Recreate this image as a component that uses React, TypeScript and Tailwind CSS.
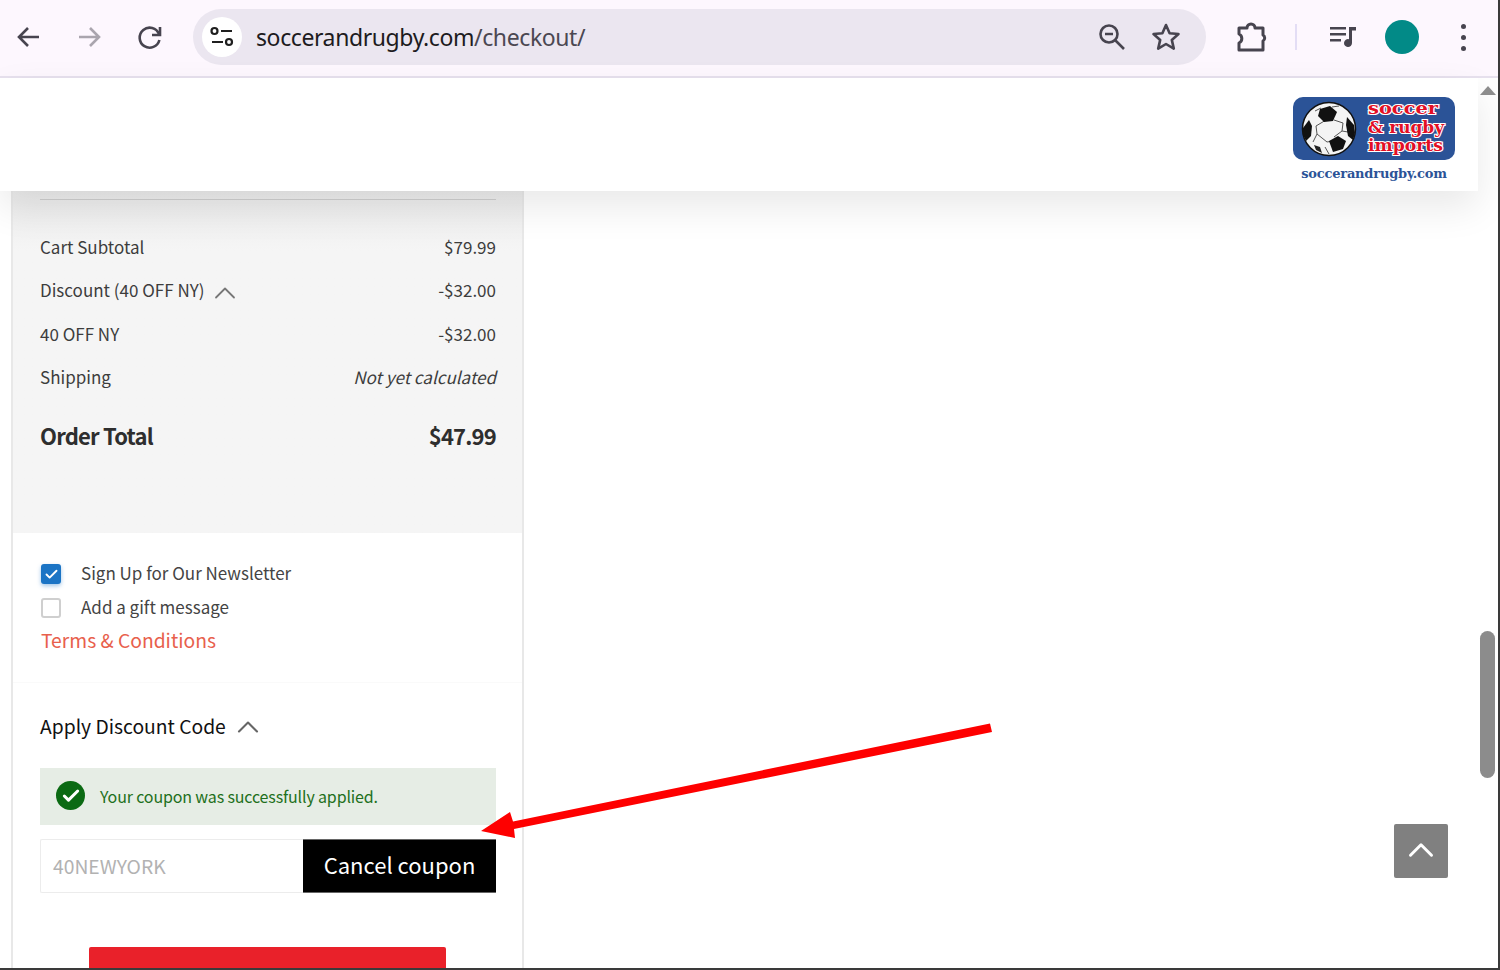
import React from 'react';
import { Check, ChevronUp } from 'lucide-react';

const sans = 'font-["Noto_Sans_CJK_SC","Noto_Sans",sans-serif]';

const SoccerBall = () => (
  <svg viewBox="0 0 56 56" className="h-[56px] w-[56px] shrink-0">
    <circle cx="28" cy="28" r="26.5" fill="#f4f4f4" stroke="#111" strokeWidth="1.5" />
    <g stroke="#555" strokeWidth="1" fill="none">
      <path d="M25 19l-10 6M33 19l9 3M16 33l-4 8M15 25l1 8 10 8 6-1M42 22l-1 8-8 6M41 30l6 1M31 6l7-1M20 7l-6 3M24 46l4 7M38 46l5-2" />
    </g>
    <path d="M19 8l10-3 7 6-4 9-9 1-6-6z" fill="#111" />
    <path d="M26 41l9-5 8 5-3 8-10 3z" fill="#111" transform="translate(2 -1)" />
    <path d="M2 27l6-8 3 6-1 10-5 5-3-6z" fill="#111" />
    <path d="M46 16l7 8 1 8-2 7-5-4-2-11z" fill="#111" />
    <path d="M13 44l6 2 2 6-6-3z" fill="#222" />
  </svg>
);

const Logo = () => (
  <div className="flex w-[162px] flex-col items-center">
    <div className="flex h-[63px] w-[162px] items-center rounded-[10px] bg-[#2b5397] pl-[8px]">
      <SoccerBall />
      <svg viewBox="0 0 90 60" className="ml-[3px] h-[60px] w-[90px]">
        <g
          fill="#e30f25"
          stroke="#fff"
          strokeWidth="2.2"
          fontFamily='"DejaVu Serif", serif'
          fontWeight="700"
          fontSize="17"
          style={{ paintOrder: 'stroke' }}
        >
          <text x="8" y="15" textLength="70" lengthAdjust="spacingAndGlyphs">soccer</text>
          <text x="8" y="33.500" textLength="76" lengthAdjust="spacingAndGlyphs">&amp; rugby</text>
          <text x="8" y="52" textLength="75" lengthAdjust="spacingAndGlyphs">imports</text>
        </g>
      </svg>
    </div>
    <div className='mt-[5px] w-[146px] text-center font-["DejaVu_Serif",serif] text-[13px] font-bold leading-[18px] tracking-[-0.2px] text-[#2b5397] whitespace-nowrap'>
      soccerandrugby.com
    </div>
  </div>
);

const ToolbarIcon = ({ children, className }: { children: React.ReactNode; className?: string }) => (
  <svg viewBox="0 0 32 32" fill="none" stroke="#47444f" strokeWidth="2.6" className={className ?? 'h-[32px] w-[32px] shrink-0'}>
    {children}
  </svg>
);

const Toolbar = () => (
  <div className="flex h-[78px] shrink-0 items-center border-b-2 border-[#e7e1ee] bg-[#fdf7fe] pb-[2px] pl-[13px]">
    <ToolbarIcon>
      <path d="M26 16H7M15 7l-9 9 9 9" />
    </ToolbarIcon>
    <ToolbarIcon className="ml-[28px] h-[32px] w-[32px] shrink-0 opacity-45">
      <path d="M6 16h19M17 7l9 9-9 9" />
    </ToolbarIcon>
    <ToolbarIcon className="ml-[29px] h-[32px] w-[32px] shrink-0">
      <path d="M25 13a10 10 0 1 0 .4 6" />
      <path d="M26 6v8h-8" />
    </ToolbarIcon>
    <div className="ml-[27px] flex h-[56px] w-[1013px] items-center rounded-full bg-[#ebe6f0] pl-[9px] pr-[24px]">
      <div className="flex h-[40px] w-[40px] shrink-0 items-center justify-center rounded-full bg-white">
        <svg viewBox="0 0 26 26" fill="none" stroke="#1f1f1f" strokeWidth="2.2" className="h-[26px] w-[26px]">
          <circle cx="5.500" cy="7" r="3" />
          <path d="M12 7h11M3 18h11" />
          <circle cx="20" cy="18" r="3" />
        </svg>
      </div>
      <div className='ml-[14px] flex-1 font-["Noto_Sans",sans-serif] text-[23px] leading-[32px] tracking-[-0.4px] text-[#1d1b20]'>
        soccerandrugby.com<span className="text-[#4b4852]">/checkout/</span>
      </div>
      <ToolbarIcon>
        <circle cx="13" cy="13" r="8.500" />
        <path d="M9 13h8M19 19l9 9" />
      </ToolbarIcon>
      <ToolbarIcon className="ml-[22px] h-[32px] w-[32px] shrink-0">
        <path d="M16 4l3.600 8.200 8.900.8-6.700 5.900 2 8.700-7.800-4.600-7.800 4.600 2-8.700L3.500 13l8.900-.8z" strokeLinejoin="round" />
      </ToolbarIcon>
    </div>
    <ToolbarIcon className="ml-[29px] h-[32px] w-[32px] shrink-0">
      <path
        d="M4 7h8a4 4 0 0 1 8 0h8v7a3.500 3.500 0 0 1 0 6v9H4v-7a5 5 0 0 0 0-9z"
        strokeWidth="3"
        strokeLinejoin="round"
      />
    </ToolbarIcon>
    <div className="ml-[28px] h-[26px] w-[2px] shrink-0 bg-[#e3ddf5]" />
    <svg viewBox="0 0 30 30" className="ml-[31px] h-[30px] w-[30px] shrink-0">
      <path d="M2 5h16v2.500H2zM2 11h16v2.500H2zM2 17h11v2.500H2z" fill="#47444f" />
      <path d="M21 5h7v3.500h-4V21a4 4 0 1 1-3-3.800z" fill="#47444f" />
    </svg>
    <div className="ml-[27px] h-[34px] w-[34px] shrink-0 rounded-full bg-[#028a87]" />
    <div className="ml-[42px] flex shrink-0 flex-col gap-[6px]">
      <span className="h-[5px] w-[5px] rounded-full bg-[#47444f]" />
      <span className="h-[5px] w-[5px] rounded-full bg-[#47444f]" />
      <span className="h-[5px] w-[5px] rounded-full bg-[#47444f]" />
    </div>
  </div>
);

const SummaryRow = ({ label, value, chevron, italic }: { label: string; value: string; chevron?: boolean; italic?: boolean }) => (
  <div className="flex h-[43.4px] items-center justify-between text-[17px] text-[#3d3d3d]">
    <div className="flex items-center">
      <span>{label}</span>
      {chevron && <ChevronUp size={36} strokeWidth={1.2} className="-my-[4px] ml-[3px] mt-[1px] text-[#777]" />}
    </div>
    <span className={italic ? 'italic' : ''}>{value}</span>
  </div>
);

const OrderSummary = () => (
  <div className="h-[342px] bg-[#f5f5f5] bg-gradient-to-b from-[#ebebeb] to-[#f5f5f5] to-[60px] pl-[27px] pr-[26px] pt-[8px]">
    <div className="h-[1px] bg-[#cfcfcf]" />
    <div className="mt-[25px]">
      <SummaryRow label="Cart Subtotal" value="$79.99" />
      <SummaryRow label="Discount (40 OFF NY)" value="-$32.00" chevron />
      <SummaryRow label="40 OFF NY" value="-$32.00" />
      <SummaryRow label="Shipping" value="Not yet calculated" italic />
    </div>
    <div className="mt-[14px] flex items-center justify-between text-[22px] font-bold leading-[44px] tracking-[-0.8px] text-[#2e2e2e]">
      <span>Order Total</span>
      <span>$47.99</span>
    </div>
  </div>
);

const Options = () => (
  <div className="h-[150px] border-b border-[#fafafa] px-[28px] pt-[23px] text-[17px] leading-[34px] text-[#444]">
    <label className="flex h-[34px] items-center">
      <span className="mt-[2px] flex h-[20px] w-[20px] items-center justify-center rounded-[3px] bg-[#1b74c5] shadow-[0_2px_4px_rgba(27,116,197,0.4)]">
        <Check size={15} strokeWidth={3} className="text-white" />
      </span>
      <span className="ml-[20px]">Sign Up for Our Newsletter</span>
    </label>
    <label className="flex h-[34px] items-center">
      <span className="mt-[2px] h-[20px] w-[20px] rounded-[3px] border-2 border-[#cfcfcf] bg-white" />
      <span className="ml-[20px]">Add a gift message</span>
    </label>
    <div className="-mt-[1px] h-[34px] text-[19.300px] text-[#e8604c]">Terms &amp; Conditions</div>
  </div>
);

const Coupon = () => (
  <div className="pl-[27px] pr-[26px] pt-[26px]">
    <div className="flex h-[34px] items-center text-[19.300px] text-[#111]">
      <span>Apply Discount Code</span>
      <ChevronUp size={36} strokeWidth={1.4} className="ml-[4px] mt-[2px] text-[#666]" />
    </div>
    <div className="mt-[25px] flex h-[57px] items-center bg-[#e6ede5] pb-[2px] pl-[16px]">
      <span className="flex h-[29px] w-[29px] items-center justify-center rounded-full bg-[#0b6a13]">
        <Check size={20} strokeWidth={3.6} className="text-white" />
      </span>
      <span className="ml-[15px] text-[16px] tracking-[-0.15px] text-[#1e7020]">Your coupon was successfully applied.</span>
    </div>
    <div className="mt-[14px] flex h-[54px]">
      <div className="flex flex-1 items-center rounded-l-[2px] border border-r-0 border-[#ececec] pl-[12px] text-[19.300px] text-[#b2b2b2]">
        40NEWYORK
      </div>
      <button className="h-[54px] w-[193px] border-y border-[#666] bg-black pb-[3px] text-[22px] text-white">Cancel coupon</button>
    </div>
    <div className="ml-[49px] mr-[50px] mt-[54px] h-[30px] rounded-t-[2px] bg-[#e9212a]" />
  </div>
);

const Scrollbar = () => (
  <div className="flex w-[20px] shrink-0 flex-col items-center bg-white pr-[1px] pt-[8px]">
    <div className="h-0 w-0 border-x-[8px] border-b-[9px] border-x-transparent border-b-[#8f8f8f]" />
    <div className="mt-[536px] h-[147px] w-[15px] rounded-full bg-[#8c8c8c]" />
  </div>
);

export default function App() {
  return (
    <div className={`relative flex h-[970px] w-[1500px] flex-col overflow-hidden border-b-2 border-r-2 border-[#3a3a3a] bg-white ${sans}`}>
      <Toolbar />
      <div className="flex min-h-0 flex-1">
        <div className="flex min-w-0 flex-1 flex-col">
          <div className="relative z-10 flex h-[113px] shrink-0 justify-end bg-white pr-[23px] pt-[19px] shadow-[0_16px_36px_rgba(0,0,0,0.09)]">
            <Logo />
          </div>
          <div className="ml-[11px] w-[513px] flex-1 border-x-2 border-[#e8e8e8]">
            <OrderSummary />
            <Options />
            <Coupon />
          </div>
        </div>
        <Scrollbar />
      </div>
      {/* annotation arrow sits over the page */}
      <svg viewBox="0 0 1500 970" className="pointer-events-none absolute inset-0 z-20 h-[970px] w-[1500px]">
        <path d="M990 723.500 992 732 514 829 515 838 481 831 510 812 513 821.500z" fill="#fe0000" />
      </svg>
      <button className="absolute left-[1394px] top-[824px] z-20 flex h-[54px] w-[54px] items-center justify-center rounded-[2px] bg-[#808080] pb-[2px]">
        <ChevronUp size={42} strokeWidth={1.7} className="text-white" />
      </button>
    </div>
  );
}
